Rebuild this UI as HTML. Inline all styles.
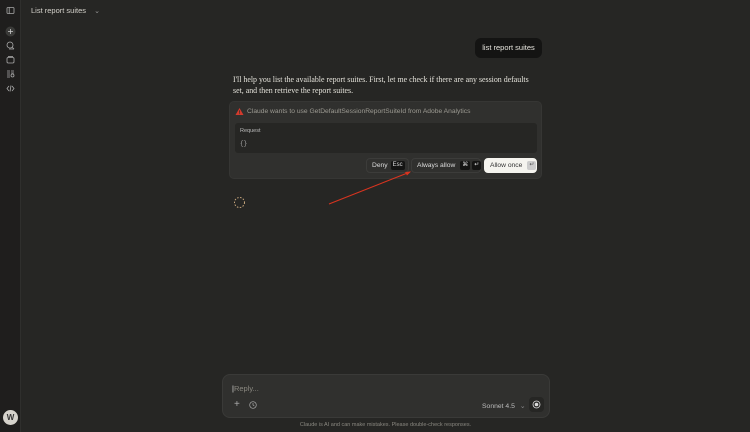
<!DOCTYPE html>
<html><head><style>
*{margin:0;padding:0;box-sizing:border-box}
body{width:750px;height:432px;background:#262624;font-family:"Liberation Sans",sans-serif;color:#c2c0b6;position:relative;overflow:hidden}
.sb{position:absolute;left:0;top:0;width:21px;height:432px;background:#1f1e1d;border-right:1px solid #2f2f2d}
.ic{position:absolute;left:6px;width:9px;height:9px}
.abs{position:absolute}
.btn{position:absolute;top:56px;height:15px;border:1px solid #3c3c3a;border-radius:4px;font-size:6.7px;color:#ddd;display:flex;align-items:center;white-space:nowrap;padding-left:5px}
.kbd{display:inline-block;background:#141413;border-radius:2px;padding:0 2px;height:9px;line-height:9px;font-size:6px;color:#ddd;margin-left:3px}
</style></head><body>
<div class="sb">
<svg class="ic" style="top:6px" viewBox="0 0 9 9"><rect x="1" y="1.5" width="7" height="6" rx="1" fill="none" stroke="#aaa" stroke-width=".8"/><line x1="3.2" y1="1.5" x2="3.2" y2="7.5" stroke="#aaa" stroke-width=".8"/></svg>
<svg class="abs" style="left:5px;top:26px" width="11" height="11" viewBox="0 0 11 11"><circle cx="5.5" cy="5.5" r="5" fill="#3a3a38"/><path d="M5.5 3v5M3 5.5h5" stroke="#ccc" stroke-width=".8"/></svg>
<svg class="ic" style="top:41px" viewBox="0 0 9 9"><circle cx="4" cy="4" r="3" fill="none" stroke="#aaa" stroke-width=".8"/><path d="M3 8h5M6 6l2 2" stroke="#aaa" stroke-width=".8"/></svg>
<svg class="ic" style="top:55px" viewBox="0 0 9 9"><rect x="1" y="2.5" width="7" height="5.5" rx="1.2" fill="none" stroke="#aaa" stroke-width=".8"/><path d="M2 1.5h5" stroke="#aaa" stroke-width=".8"/></svg>
<svg class="ic" style="top:69px" viewBox="0 0 9 9"><path d="M1 2h3M1 4h3M5 2h3M5 4h3M1 6h3M1 8h3M5 6.5a1.5 1.5 0 1 0 3 0a1.5 1.5 0 1 0-3 0" fill="none" stroke="#aaa" stroke-width=".8"/></svg>
<svg class="ic" style="top:84px" viewBox="0 0 9 9"><path d="M3 2L1 4.5 3 7M6 2l2 2.5L6 7M5 1.5 4 7.5" fill="none" stroke="#aaa" stroke-width=".8"/></svg>
<div class="abs" style="left:3px;top:410px;width:15px;height:15px;border-radius:50%;background:#d6d3cc;color:#333;font-size:8px;font-weight:bold;text-align:center;line-height:15px">W</div>
</div>
<div class="abs" style="left:31px;top:6px;font-size:7.5px;color:#d4d2cb">List report suites <span style="font-size:7px;color:#999;margin-left:6px">⌄</span></div>

<div class="abs" style="left:475px;top:38px;width:67px;height:20px;background:#141413;border-radius:6px;font-size:7.5px;color:#e6e4dd;text-align:center;line-height:20px">list report suites</div>
<div class="abs" style="left:233px;top:75px;width:305px;font-family:'Liberation Serif',serif;font-size:7.9px;line-height:10.5px;color:#e4e2da">I'll help you list the available report suites. First, let me check if there are any session defaults set, and then retrieve the report suites.</div>

<div class="abs" style="left:229px;top:101px;width:313px;height:78px;background:#30302e;border-radius:5px;border:1px solid #363634">
<svg class="abs" style="left:5px;top:5px" width="9" height="9" viewBox="0 0 9 9"><path d="M4.5 1 8.5 8h-8z" fill="#d33a2c"/><rect x="4.1" y="3.3" width=".8" height="2.5" fill="#30302e"/><rect x="4.1" y="6.3" width=".8" height=".8" fill="#30302e"/></svg>
<div class="abs" style="left:17px;top:6px;font-size:6.7px;color:#9c9a92">Claude wants to use GetDefaultSessionReportSuiteId from Adobe Analytics</div>
<div class="abs" style="left:5px;top:21px;width:302px;height:30px;background:#262624;border-radius:3px">
<div class="abs" style="left:5px;top:5px;font-size:5.5px;color:#bbb">Request</div>
<div class="abs" style="left:5px;top:17px;font-size:6px;color:#aaa;font-family:'Liberation Mono',monospace">{}</div></div>
<div class="btn" style="left:136px;width:43px">Deny<span class="kbd">Esc</span></div>
<div class="btn" style="left:181px;width:70px">Always allow<span class="kbd" style="margin-left:5px">⌘</span><span class="kbd" style="margin-left:2px">↵</span></div>
<div class="btn" style="left:254px;width:53px;background:#f5f4ef;border-color:#f5f4ef;color:#333">Allow once<span class="kbd" style="background:#ccc;color:#555;margin-left:5px">↵</span></div>
</div>
<svg class="abs" style="left:328px;top:168px" width="86" height="38" viewBox="0 0 86 38"><path d="M1 36 82 4" stroke="#d9341f" stroke-width="1"/><path d="M83 3.5l-6 0.5 2 3.5z" fill="#d9341f"/></svg>
<svg class="abs" style="left:233px;top:196px" width="13" height="13" viewBox="0 0 13 13"><circle cx="6.5" cy="6.5" r="5" fill="none" stroke="#c8a77e" stroke-width="1" stroke-dasharray="1.5 1.5"/></svg>

<div class="abs" style="left:222px;top:374px;width:328px;height:44px;background:#30302e;border-radius:8px;border:1px solid #3a3a38">
<div class="abs" style="left:9px;top:9px;font-size:7.5px;color:#8a8880"><span style="color:#ddd">|</span>Reply...</div>
<div class="abs" style="left:11px;top:24px;font-size:10px;color:#aaa">+</div>
<svg class="abs" style="left:26px;top:26px" width="8" height="8" viewBox="0 0 8 8"><circle cx="4" cy="4" r="3.3" fill="none" stroke="#aaa" stroke-width=".7"/><path d="M4 2v2l1.3 1" fill="none" stroke="#aaa" stroke-width=".7"/></svg>
<div class="abs" style="left:259px;top:27px;font-size:6.8px;color:#bbb">Sonnet 4.5 <span style="color:#888;margin-left:3px">⌄</span></div>
<div class="abs" style="left:306px;top:22px;width:15px;height:15px;background:#262624;border-radius:4px"><svg class="abs" style="left:3px;top:3px" width="9" height="9" viewBox="0 0 9 9"><circle cx="4.5" cy="4.5" r="3.5" fill="none" stroke="#ddd" stroke-width=".8"/><circle cx="4.5" cy="4.5" r="1.8" fill="#ddd"/></svg></div>
</div>
<div class="abs" style="left:0;width:771px;top:422px;text-align:center;font-size:5.5px;color:#8a8880">Claude is AI and can make mistakes. Please double-check responses.</div>
</body></html>
